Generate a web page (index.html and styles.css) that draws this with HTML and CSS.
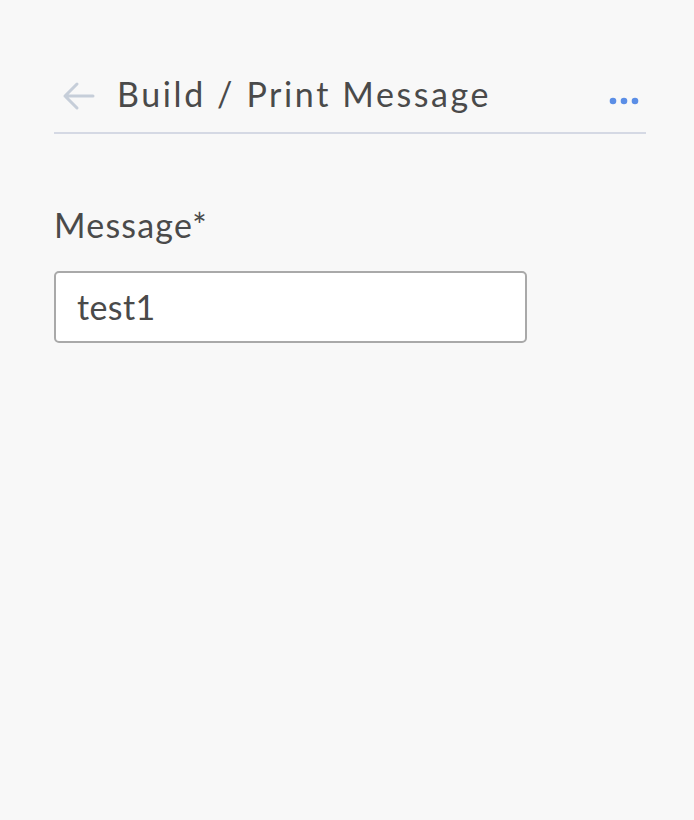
FILE: index.html
```html
<!DOCTYPE html>
<html>
<head>
<meta charset="utf-8">
<link rel="stylesheet" href="styles.css">
</head>
<body>
<div class="page">
  <header class="header">
    <svg class="back" width="34" height="30" viewBox="0 0 34 30">
      <path d="M16 3 L4 15 L16 27 M4 15 H32" fill="none" stroke="#c6ced9" stroke-width="3" stroke-linecap="round" stroke-linejoin="round"/>
    </svg>
    <h1 class="title">Build / Print Message</h1>
    <svg class="more" width="30" height="8" viewBox="0 0 30 8">
      <circle cx="4" cy="4" r="3.3" fill="#5b8ee6"/>
      <circle cx="15" cy="4" r="3.3" fill="#5b8ee6"/>
      <circle cx="26" cy="4" r="3.3" fill="#5b8ee6"/>
    </svg>
  </header>
  <div class="field">
    <label class="label">Message*</label>
    <div class="input">test1</div>
  </div>
</div>
</body>
</html>
```

FILE: styles.css
```css
html, body {
  margin: 0;
  padding: 0;
  background: #f8f8f8;
}
body {
  font-family: Lato, "Open Sans", sans-serif;
  color: #4a4a4a;
}
.page {
  padding: 66px 48px 0 54px;
}
.header {
  display: flex;
  align-items: center;
  height: 66px;
  border-bottom: 2px solid #d5d9e4;
}
.back {
  margin-left: 7px;
  margin-right: 22px;
  margin-bottom: 6px;
}
.title {
  margin: 0 0 12px 0;
  font-size: 34px;
  font-weight: 400;
  letter-spacing: 2.6px;
  color: #4a4a4a;
  flex: 1;
}
.more {
  margin-right: 7px;
  margin-top: 4px;
}
.field {
  padding-top: 68px;
}
.label {
  display: block;
  font-size: 34px;
  line-height: 46px;
  letter-spacing: 1.2px;
  color: #4a4a4a;
}
.input {
  margin-top: 23px;
  width: 473px;
  height: 72px;
  box-sizing: border-box;
  background: #fff;
  border: 2px solid #a9a9a9;
  border-radius: 5px;
  padding-left: 21px;
  font-size: 34px;
  line-height: 68px;
  letter-spacing: 0.4px;
  color: #4a4a4a;
}
```
